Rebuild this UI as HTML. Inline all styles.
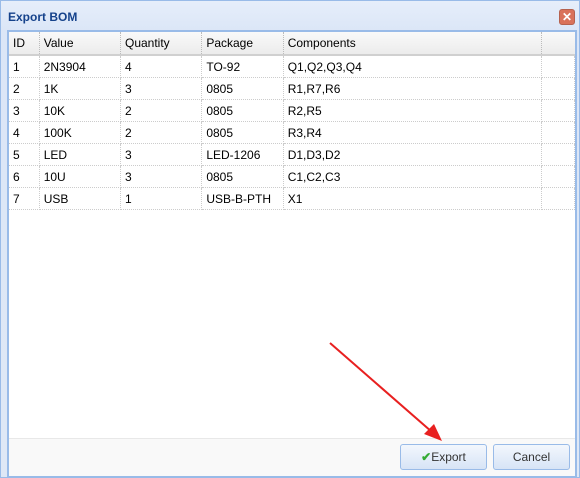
<!DOCTYPE html>
<html><head><style>
body{margin:0;width:580px;height:478px;overflow:hidden;background:#fff;font-family:"Liberation Sans",Arial,sans-serif;font-size:12px;}
.win{position:absolute;left:0;top:0;width:578px;height:476px;border:1px solid #99bbe8;background:linear-gradient(#e6eefa,#dbe6f7 30px,#dfe8f6);}
.title{position:absolute;left:7px;top:9px;font-weight:bold;color:#15428b;font-size:12px;}
.close{position:absolute;left:558px;top:8px;width:14px;height:14px;border-radius:3px;background:#d9725a;border:1px solid #b5614e;color:#fff;font-size:12px;font-weight:bold;line-height:14px;text-align:center;}
.panel{position:absolute;left:6px;top:29px;width:566px;height:443px;border:2px solid #99bbe8;background:#fff;}
table{border-collapse:collapse;position:absolute;left:0;top:0;}
th{height:22px;background:linear-gradient(#f9f9f9,#ececec);font-weight:normal;text-align:left;padding:0 0 0 4px;border-right:1px dotted #bbb;border-bottom:2px solid #d0d0d0;color:#000;}
td{height:21px;padding:0 0 0 4px;border-right:1px dotted #ccc;border-bottom:1px dotted #ccc;}
.foot{position:absolute;left:0;top:406px;width:566px;height:37px;background:#f9f9f9;border-top:1px solid #e8e8e8;}
.btn{position:absolute;top:5px;height:24px;border:1px solid #99bbe8;border-radius:3px;background:linear-gradient(#f3f7fd,#d7e4f6);text-align:center;line-height:24px;font-size:12px;color:#333;}
</style></head><body>
<div class="win">
<div class="title">Export BOM</div>
<div class="close">✕</div>
<div class="panel">
<table>
<tr><th style="width:26px">ID</th><th style="width:77px">Value</th><th style="width:77px">Quantity</th><th style="width:77px">Package</th><th style="width:257px">Components</th><th style="width:29px;border-right:none"></th></tr>
<tr><td>1</td><td>2N3904</td><td>4</td><td>TO-92</td><td>Q1,Q2,Q3,Q4</td><td></td></tr>
<tr><td>2</td><td>1K</td><td>3</td><td>0805</td><td>R1,R7,R6</td><td></td></tr>
<tr><td>3</td><td>10K</td><td>2</td><td>0805</td><td>R2,R5</td><td></td></tr>
<tr><td>4</td><td>100K</td><td>2</td><td>0805</td><td>R3,R4</td><td></td></tr>
<tr><td>5</td><td>LED</td><td>3</td><td>LED-1206</td><td>D1,D3,D2</td><td></td></tr>
<tr><td>6</td><td>10U</td><td>3</td><td>0805</td><td>C1,C2,C3</td><td></td></tr>
<tr><td>7</td><td>USB</td><td>1</td><td>USB-B-PTH</td><td>X1</td><td></td></tr>
</table>
<div class="foot">
<div class="btn" style="left:391px;width:85px"><span style="color:#3a3;font-weight:bold">✔</span>Export</div>
<div class="btn" style="left:484px;width:75px">Cancel</div>
</div>
</div>
</div>
<svg style="position:absolute;left:0;top:0" width="580" height="478">
<line x1="330" y1="343" x2="432" y2="432" stroke="#e82020" stroke-width="2"/>
<polygon points="442,441 424,434 434,424" fill="#e82020"/>
</svg>
</body></html>
